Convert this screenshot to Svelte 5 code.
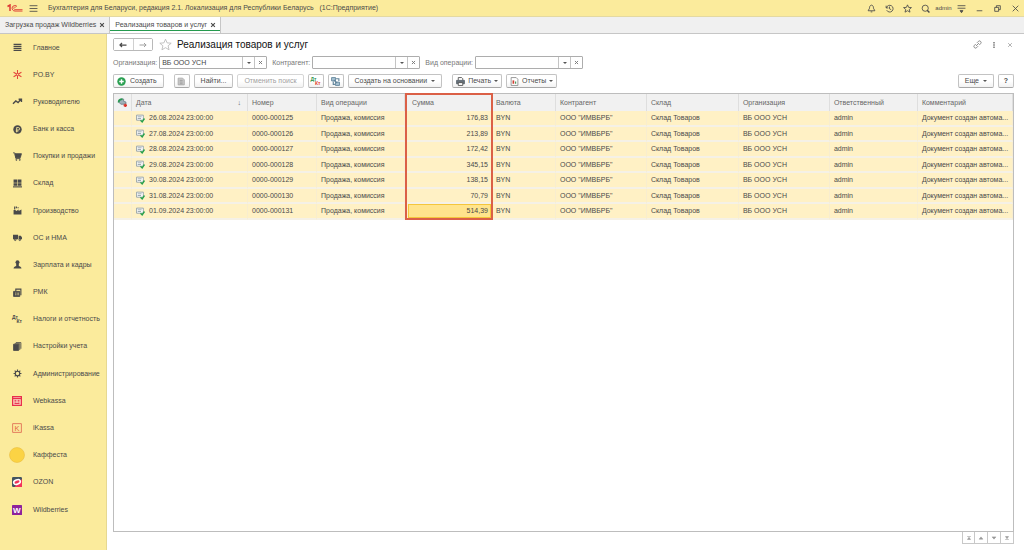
<script>
  const icons = {
    menu: '<path d="M1 3h14M1 8h14M1 13h14"/>',
    bell: '<path d="M8 2C5 2.500 4.500 5 4.500 7.500L2 12h12l-2.500-4.500C11.500 5 11 2.500 8 2zM6.500 14h3"/>',
    recent: '<path d="M2 3v4h4M2.500 7A6 6 0 1 1 3 11M8 4.500V8.500l3 1.500"/>',
    star: '<path d="M8 1.500l2 4.500 5 .4-3.800 3.200 1.200 4.900L8 11.900l-4.400 2.600 1.200-4.900L1 6.400 6 6z"/>',
    search: '<circle cx="7.500" cy="7.500" r="5.500"/><path d="M11 11l4 4" stroke-width="2.500"/>',
    settings: '<path d="M1 3h14M1 7.500h14M5 11.500h6"/><path d="M6 13h4l-2 2.500z" fill="currentColor"/>',
    minimize: '<path d="M3 12h10"/>',
    restore: '<path d="M3 6h7v7H3zM6 6V3h7v7h-3"/>',
    close: '<path d="M3 3l10 10M13 3L3 13"/>',
    link: '<path d="M7 5l2.500-2.500a2.800 2.800 0 0 1 4 4L11 9M9 11l-2.500 2.500a2.800 2.800 0 0 1-4-4L5 7M5.500 10.500l5-5"/>',
    dots: '<path d="M8 0v4M8 6v4M8 12v4" stroke-width="4"/>',
    back: '<path d="M1.500 8H15M6 4L2 8l4 4" stroke-width="2.500"/>',
    forward: '<path d="M1 8h13.500M10 4l4 4-4 4" stroke-width="2"/>',
    create: '<circle cx="8" cy="8" r="7.500" fill="#2ba052" stroke="none"/><path d="M8 4v8M4 8h8" stroke="#fff" stroke-width="2.500"/>',
    copy: '<path d="M2 2h8l3 3v9H2z" fill="#c8c8c8" stroke="#aaa"/><path d="M5 6h5M5 9h5M5 12h5" stroke="#999"/>',
    structure: '<path d="M1 1h7v6H1zM8 9h7v6H8z" fill="#a9c3d4" stroke="#5f8299"/><path d="M9 3h5v4M4 8v5h3M5 5l6 6" stroke="#5f8299" stroke-width="2"/>',
    print: '<path d="M4 6V1h6l2 2v3" fill="#fff"/><path d="M1 6h14v6H1z" fill="#66717a" stroke="#59636b"/><path d="M4 10h8v5H4z" fill="#fff"/>',
    report: '<path d="M2 1h9l3 3v11H2z" fill="#fff" stroke="#888"/><path d="M6 12V6" stroke="#cf4034" stroke-width="3"/><path d="M10 12V8" stroke="#3f9358" stroke-width="2"/>',
    sync: '<path d="M2 8C2 3 6 1 10 2v4l4 1v4H5z" fill="#9fb0b8" stroke="#6b7f89"/><path d="M1 8C1 4 4 2 8 2" stroke="#289851" stroke-width="3"/><path d="M10 13h6M13 10v6" stroke="#dc342c" stroke-width="3"/>',
    doc: '<path d="M1 2h12v9H1z" fill="#fff" stroke="#8c9aa3"/><path d="M3 5h7M3 8h6" stroke="#8c9aa3"/><path d="M8 11l3 3 4-6" stroke="#27a04c" stroke-width="2.500"/>',
    main: '<path d="M1 2.500h14M1 6h14M1 9.500h14M1 13h14" stroke-width="2"/>',
    po: '<path d="M8 0v16M1 4l14 8M15 4L1 12" stroke="#e3433b" stroke-width="1.800"/><circle cx="8" cy="8" r="2" fill="#fbeb9c" stroke="#e3433b"/>',
    trend: '<path d="M0 12l5-5 4 3 5-6M10 4h5v5" stroke-width="2.500"/>',
    bank: '<circle cx="8" cy="8" r="7.500" fill="currentColor" stroke="none"/><path d="M6.500 13V4.500h3a2.200 2.200 0 0 1 0 4.500H5M5 11h4.500" stroke="#fbeb9c"/>',
    cart: '<path d="M3.500 3H15l-2 7H5z" fill="currentColor"/><path d="M0 1.500h3l2 10H13"/><circle cx="6" cy="14" r="1"/><circle cx="12" cy="14" r="1"/>',
    stock: '<path d="M1 1h6.500v5.500H1zM8.500 1H15v5.500H8.500zM1 7.500h6.500V12H1zM8.500 7.500H15V12H8.500z" fill="currentColor" stroke="none"/><path d="M0 14h16" stroke-width="2"/>',
    factory: '<path d="M1 15V7h3l2 2 4-3v3l5-3v9z" fill="currentColor" stroke="none"/><path d="M3 6V1M6 4V1M9 4V2" stroke-width="2"/>',
    truck: '<path d="M0 3h9v8H0zM10 5h4l2 3v3h-6z" fill="currentColor" stroke="none"/><circle cx="4" cy="12" r="1.500"/><circle cx="12" cy="12" r="1.500"/>',
    person: '<circle cx="8" cy="4" r="3.500" fill="currentColor" stroke="none"/><path d="M6.500 7h3v4h-3z" fill="currentColor"/><path d="M1 15c0-3 3-4 5-4.500h4c2 .5 5 1.500 5 4.500z" fill="currentColor" stroke="none"/>',
    rmk: '<path d="M1 6h11v9H1z" fill="currentColor"/><path d="M5 6V2h9v11" stroke-width="2"/><path d="M4 9h2M4 12h2M9 8v5" stroke="#fbeb9c"/>',
    books: '<path d="M1 4h9v11H1z" fill="currentColor"/><path d="M3 3h9v11M5 1h9v11"/>',
    gear: '<circle cx="8" cy="8" r="4" stroke-width="2"/><path d="M8 1v3M8 12v3M1 8h3M12 8h3M3 3l2 2M11 11l2 2M13 3l-2 2M5 11l-2 2" stroke-width="2"/>',
    webkassa: '<path d="M1 1h14v14H1z" fill="#fbd4c1" stroke="#e92f4c" stroke-width="2"/><path d="M1 4h14" stroke="#e92f4c" stroke-width="2"/><path d="M4 7h3M9 7h3M4 9.500h3M9 9.500h3M4 12h8" stroke="#e92f4c"/>',
    ikassa: '<path d="M1 1h14v14H1z" stroke="#e2765a"/><text x="4" y="12.500" font-size="12" fill="#e2653f" stroke="none">K</text>',
    kaffesta: '<circle cx="8" cy="8" r="7.500" fill="#fbd344" stroke="#e5b73b" stroke-width=".5"/>',
    ozon: '<rect width="16" height="16" rx="2" fill="#435460" stroke="none"/><path d="M16 3v13H4z" fill="#f3335b" stroke="none"/><ellipse cx="8" cy="8" rx="5.500" ry="3.500" transform="rotate(-22 8 8)" fill="#ee3358" stroke="#fff" stroke-width="2.500"/>',
    wildberries: '<rect width="16" height="16" rx="1" fill="#8d239c" stroke="none"/><text x="1.500" y="12.500" font-size="13" font-weight="bold" fill="#fff" stroke="none">W</text>',
    first: '<path d="M3 4h10"/><path d="M8 6l4 6H4z" fill="currentColor"/>',
    up: '<path d="M8 5l5 6H3z" fill="currentColor"/>',
    down: '<path d="M8 11l5-6H3z" fill="currentColor"/>',
    last: '<path d="M3 12h10"/><path d="M8 10l4-6H4z" fill="currentColor"/>',
  };

  const sections = [
    ['main', 'Главное'],
    ['po', 'PO.BY'],
    ['trend', 'Руководителю'],
    ['bank', 'Банк и касса'],
    ['cart', 'Покупки и продажи'],
    ['stock', 'Склад'],
    ['factory', 'Производство'],
    ['truck', 'ОС и НМА'],
    ['person', 'Зарплата и кадры'],
    ['rmk', 'РМК'],
    ['dtkt', 'Налоги и отчетность'],
    ['books', 'Настройки учета'],
    ['gear', 'Администрирование'],
    ['webkassa', 'Webkassa'],
    ['ikassa', 'iKassa'],
    ['kaffesta', 'Каффеста'],
    ['ozon', 'OZON'],
    ['wildberries', 'Wildberries'],
  ];

  const columns = [
    { title: '', width: 18 },
    { title: 'Дата', width: 116 },
    { title: 'Номер', width: 69 },
    { title: 'Вид операции', width: 88 },
    { title: 'Сумма', width: 87 },
    { title: 'Валюта', width: 64 },
    { title: 'Контрагент', width: 91 },
    { title: 'Склад', width: 92 },
    { title: 'Организация', width: 91 },
    { title: 'Ответственный', width: 88 },
    { title: 'Комментарий', width: 95 },
  ];
  const total = columns.reduce((sum, c) => sum + c.width, 0);

  const rows = [
    ['26.08.2024 23:00:00', '0000-000125', '176,83'],
    ['27.08.2024 23:00:00', '0000-000126', '213,89'],
    ['28.08.2024 23:00:00', '0000-000127', '172,42'],
    ['29.08.2024 23:00:00', '0000-000128', '345,15'],
    ['30.08.2024 23:00:00', '0000-000129', '138,15'],
    ['31.08.2024 23:00:00', '0000-000130', '70,79'],
    ['01.09.2024 23:00:00', '0000-000131', '514,39'],
  ];

  let filters = $state([
    { id: 'org', label: 'Организация:', value: 'ВБ ООО УСН' },
    { id: 'partner', label: 'Контрагент:', value: '' },
    { id: 'kind', label: 'Вид операции:', value: '' },
  ]);
  let selected = $state(6);
</script>

{#snippet icon(name)}
  {#if name === 'dtkt'}
    <span class="dtkt" aria-hidden="true"><i>Дт</i><i>Кт</i></span>
  {:else}
    <svg class="icon {name}" viewBox="0 0 16 16" fill="none" stroke="currentColor" stroke-width="1.5" aria-hidden="true">{@html icons[name]}</svg>
  {/if}
{/snippet}

<div class="app">
  <header class="titlebar">
    <svg class="logo" viewBox="0 0 32 16" fill="none" stroke="#dd3a35" aria-hidden="true">
      <path d="M1 5l5-3v12" stroke-width="3" />
      <path d="M20 5a5.500 5.500 0 1 0-4 9h15" stroke-width="2" />
      <path d="M18 7a2.500 2.500 0 1 0-2 4h15" stroke-width="1.500" />
    </svg>
    <button class="plain" aria-label="Меню">{@render icon('menu')}</button>
    <span class="app-name">Бухгалтерия для Беларуси, редакция 2.1. Локализация для Республики Беларусь &nbsp; (1С:Предприятие)</span>
    <div class="system">
      <button class="plain" aria-label="Оповещения">{@render icon('bell')}</button>
      <button class="plain" aria-label="История">{@render icon('recent')}</button>
      <button class="plain" aria-label="Избранное">{@render icon('star')}</button>
      <button class="plain" aria-label="Поиск">{@render icon('search')}</button>
      <button class="plain user">admin</button>
      <button class="plain" aria-label="Настройки">{@render icon('settings')}</button>
      <button class="plain" aria-label="Свернуть">{@render icon('minimize')}</button>
      <button class="plain" aria-label="Восстановить">{@render icon('restore')}</button>
      <button class="plain" aria-label="Закрыть">{@render icon('close')}</button>
    </div>
  </header>

  <div class="tabs">
    <div class="tab">
      <button class="plain">Загрузка продаж Wildberries</button>
      <button class="plain tab-close" aria-label="Закрыть вкладку">{@render icon('close')}</button>
    </div>
    <div class="tab active">
      <button class="plain">Реализация товаров и услуг</button>
      <button class="plain tab-close" aria-label="Закрыть вкладку">{@render icon('close')}</button>
    </div>
  </div>

  <div class="body">
    <nav class="sidebar">
      {#each sections as [name, label]}
        <a href="#{name}"><span class="section-icon">{@render icon(name)}</span>{label}</a>
      {/each}
    </nav>

    <main>
      <div class="heading">
        <div class="history">
          <button aria-label="Назад">{@render icon('back')}</button>
          <button class="muted" aria-label="Вперед">{@render icon('forward')}</button>
        </div>
        <button class="plain favorite" aria-label="В избранное">{@render icon('star')}</button>
        <h1>Реализация товаров и услуг</h1>
        <div class="window-tools">
          <button class="plain" aria-label="Ссылка">{@render icon('link')}</button>
          <button class="plain" aria-label="Еще">{@render icon('dots')}</button>
          <button class="plain" aria-label="Закрыть">{@render icon('close')}</button>
        </div>
      </div>

      <div class="filters">
        {#each filters as filter}
          <div class="filter">
            <label for={filter.id}>{filter.label}</label>
            <div class="field">
              <input id={filter.id} type="text" bind:value={filter.value} />
              <button aria-label="Выбрать"><span class="caret"></span></button>
              <button aria-label="Очистить" onclick={() => (filter.value = '')}>{@render icon('close')}</button>
            </div>
          </div>
        {/each}
      </div>

      <div class="toolbar">
        <button class="btn">{@render icon('create')}Создать</button>
        <button class="btn square spaced" aria-label="Скопировать">{@render icon('copy')}</button>
        <button class="btn">Найти...</button>
        <button class="btn muted">Отменить поиск</button>
        <button class="btn square colored" aria-label="Проводки">{@render icon('dtkt')}</button>
        <button class="btn square" aria-label="Структура">{@render icon('structure')}</button>
        <button class="btn">Создать на основании<span class="caret"></span></button>
        <button class="btn tight spaced">{@render icon('print')}Печать<span class="caret"></span></button>
        <button class="btn tight">{@render icon('report')}Отчеты<span class="caret"></span></button>
        <button class="btn more">Еще<span class="caret"></span></button>
        <button class="btn square help">?</button>
      </div>

      <div class="list">
        <table>
          <colgroup>
            {#each columns as column}
              <col style:width="{(column.width / total) * 100}%" />
            {/each}
          </colgroup>
          <thead>
            <tr>
              {#each columns as column, i}
                <th class:marked={i === 4}>
                  {#if i === 0}
                    {@render icon('sync')}
                  {:else if i === 1}
                    <span class="sorted">{column.title}<span class="arrow">↓</span></span>
                  {:else}
                    {column.title}
                  {/if}
                </th>
              {/each}
            </tr>
          </thead>
          <tbody>
            {#each rows as [date, number, sum], i}
              <tr onclick={() => (selected = i)}>
                <td></td>
                <td><span class="date">{@render icon('doc')}{date}</span></td>
                <td>{number}</td>
                <td>Продажа, комиссия</td>
                <td class="sum marked" class:selected={selected === i}>{sum}</td>
                <td>BYN</td>
                <td>ООО "ИМВБРБ"</td>
                <td>Склад Товаров</td>
                <td>ВБ ООО УСН</td>
                <td>admin</td>
                <td>Документ создан автома...</td>
              </tr>
            {/each}
          </tbody>
        </table>
      </div>

      <div class="pager">
        <button aria-label="В начало">{@render icon('first')}</button>
        <button aria-label="Вверх">{@render icon('up')}</button>
        <button aria-label="Вниз">{@render icon('down')}</button>
        <button aria-label="В конец">{@render icon('last')}</button>
      </div>
    </main>
  </div>
</div>

<style>
  :global(body) {
    background: #fff;
  }

  .app {
    display: flex;
    flex-direction: column;
    min-height: 100vh;
    font: 7px/10px "Liberation Sans", Arial, sans-serif;
    color: #4a4a4a;
  }

  .app * {
    box-sizing: border-box;
  }

  button,
  input {
    font: inherit;
    color: inherit;
    margin: 0;
    padding: 0;
  }

  button {
    display: flex;
    align-items: center;
    justify-content: center;
    cursor: pointer;
  }

  .plain {
    background: none;
    border: none;
  }

  .icon {
    width: 9px;
    height: 9px;
    flex: none;
    overflow: visible;
  }

  .caret {
    border: 2px solid transparent;
    border-top-color: #555;
    border-bottom: none;
  }

  .titlebar {
    display: flex;
    align-items: center;
    height: 17px;
    padding: 0 4px 0 7px;
    background: #fbeb9c;
    border-bottom: 1px solid #e4d9a2;
  }

  .logo {
    width: 16px;
    height: 8px;
    margin-right: 6px;
  }

  .app-name {
    margin-left: 10px;
  }

  .system {
    display: flex;
    gap: 9px;
    margin-left: auto;
  }

  .user {
    width: 17px;
    margin: 0 -4px;
    font-size: 6px;
  }

  .tabs {
    display: flex;
    height: 17px;
    background: #f0f0f0;
    border-bottom: 1px solid #c6c6c6;
  }

  .tab {
    display: flex;
    align-items: center;
    gap: 3px;
    padding: 0 4px 0 5px;
    border-right: 1px solid #c6c6c6;
  }

  .tab.active {
    background: #fff;
    box-shadow: inset 0 -2px #fff, inset 0 -3px #249a4e;
  }

  .tab-close .icon {
    width: 6px;
    height: 6px;
    stroke-width: 3;
  }

  .body {
    display: flex;
    flex: 1;
  }

  .sidebar {
    display: flex;
    flex-direction: column;
    flex: none;
    width: 107px;
    padding-bottom: 27px;
    background: #fbeb9c;
    border-right: 1px solid #e6d891;
  }

  .sidebar a {
    display: flex;
    flex: 1;
    align-items: center;
    gap: 8px;
    padding-left: 9px;
    color: inherit;
    text-decoration: none;
    white-space: nowrap;
  }

  .section-icon {
    display: flex;
    justify-content: center;
    width: 16px;
  }

  .kaffesta {
    width: 16px;
    height: 16px;
  }

  .webkassa,
  .ikassa,
  .ozon,
  .wildberries {
    width: 10px;
    height: 10px;
  }

  .dtkt {
    display: flex;
    flex-direction: column;
    width: 10px;
    font-size: 5px;
    font-weight: bold;
    line-height: 4px;
  }

  .dtkt i {
    align-self: flex-start;
    font-style: normal;
  }

  .dtkt i:last-child {
    align-self: flex-end;
  }

  .colored i:first-child {
    color: #2a934c;
  }

  .colored i:last-child {
    color: #e0432e;
  }

  main {
    display: flex;
    flex: 1;
    flex-direction: column;
    min-width: 0;
    padding: 4px 10px 6px 6px;
  }

  .heading {
    display: flex;
    align-items: center;
    height: 13px;
  }

  .history {
    display: flex;
    width: 40px;
    height: 13px;
    border: 1px solid #b9b9b9;
    border-radius: 2px;
  }

  .history button {
    flex: 1;
    background: #fff;
    border: none;
  }

  .history button + button {
    border-left: 1px solid #d0d0d0;
  }

  .history .icon {
    width: 8px;
    height: 8px;
  }

  .muted {
    color: #a0a0a0;
  }

  .favorite {
    margin: 0 5px 0 6px;
    color: #b5b5b5;
  }

  .favorite .icon {
    width: 13px;
    height: 13px;
    stroke-width: 1;
  }

  h1 {
    margin: 0;
    font-size: 10px;
    font-weight: normal;
    color: #111;
  }

  .window-tools {
    display: flex;
    gap: 7px;
    margin-left: auto;
  }

  .window-tools .icon:not(.link) {
    width: 6px;
    height: 6px;
  }

  .window-tools button {
    width: 9px;
    color: #777;
  }

  .filters {
    display: flex;
    gap: 5px;
    margin-top: 5px;
  }

  .filter {
    display: flex;
    align-items: center;
    gap: 2px;
    color: #777;
  }

  .field {
    display: flex;
    width: 108px;
    height: 13px;
    border: 1px solid #adadad;
    border-radius: 1px;
  }

  .field input {
    flex: 1;
    min-width: 0;
    padding: 0 2px;
    border: none;
    background: none;
    color: #444;
    outline: none;
  }

  .field button {
    width: 12px;
    background: #fff;
    border: none;
    border-left: 1px solid #c4c4c4;
  }

  .field .icon {
    width: 5px;
    height: 5px;
    stroke-width: 3;
  }

  .toolbar {
    display: flex;
    gap: 4px;
    margin: 5px 0;
  }

  .btn {
    gap: 4px;
    height: 14px;
    padding: 0 6px;
    background: linear-gradient(#fff 50%, #f2f2f2);
    border: 1px solid #c3c3c3;
    border-bottom-color: #a8a8a8;
    border-radius: 2px;
    white-space: nowrap;
  }

  .btn.muted {
    border-color: #d6d6d6;
  }

  .btn.tight {
    gap: 3px;
    padding: 0 3px;
  }

  .btn:first-child {
    padding-left: 3px;
  }

  .btn.square {
    width: 16px;
    padding: 0;
  }

  .btn.spaced {
    margin-left: 6px;
  }

  .more {
    margin-left: auto;
  }

  .help {
    font-weight: bold;
  }

  .list {
    flex: 1;
    border: 1px solid #bdbdbd;
  }

  table {
    width: 100%;
    table-layout: fixed;
    border-collapse: separate;
    border-spacing: 0;
  }

  th,
  td {
    position: relative;
    padding: 0 0 0 4px;
    font-weight: normal;
    text-align: left;
    white-space: nowrap;
  }

  th {
    height: 17px;
    background: #f1f1f1;
    border-right: 1px solid #dedede;
    color: #666;
  }

  td {
    height: 15px;
    background: #fff1c5;
    border-right: 1px solid #f8edcf;
    border-bottom: 2px solid #f5f1e6;
  }

  tbody tr:nth-child(odd) td {
    height: 16px;
  }

  .sync {
    display: block;
  }

  .sorted {
    display: flex;
    justify-content: space-between;
    padding-right: 6px;
  }

  .arrow {
    font-weight: bold;
  }

  .date {
    display: flex;
    align-items: center;
    gap: 4px;
  }

  .sum {
    text-align: right;
    padding-right: 3px;
  }

  th.marked {
    padding-left: 7px;
  }

  .selected {
    background: #ffe48c;
    box-shadow: inset 3px 0 #fff1c5, inset 0 0 0 1px #f4c63c, inset 4px 0 #f4c63c;
  }

  .marked {
    z-index: 1;
  }

  /* red frame round the whole column */
  .marked::after {
    content: "";
    position: absolute;
    inset: 0 -2px -2px 0;
    border: solid #db6047;
    border-width: 0 2px;
    pointer-events: none;
  }

  th.marked::after {
    inset: -1px -2px 0 0;
    border-top-width: 2px;
  }

  tr:last-child .marked.sum::after {
    border-bottom-width: 2px;
  }

  .pager {
    display: flex;
    align-self: flex-end;
  }

  .pager button {
    width: 13px;
    height: 12px;
    background: #fff;
    border: 1px solid #c8c8c8;
    border-top: none;
    color: #999;
  }

  .pager button + button {
    border-left: none;
  }

  .pager .icon {
    width: 6px;
    height: 6px;
  }
</style>
